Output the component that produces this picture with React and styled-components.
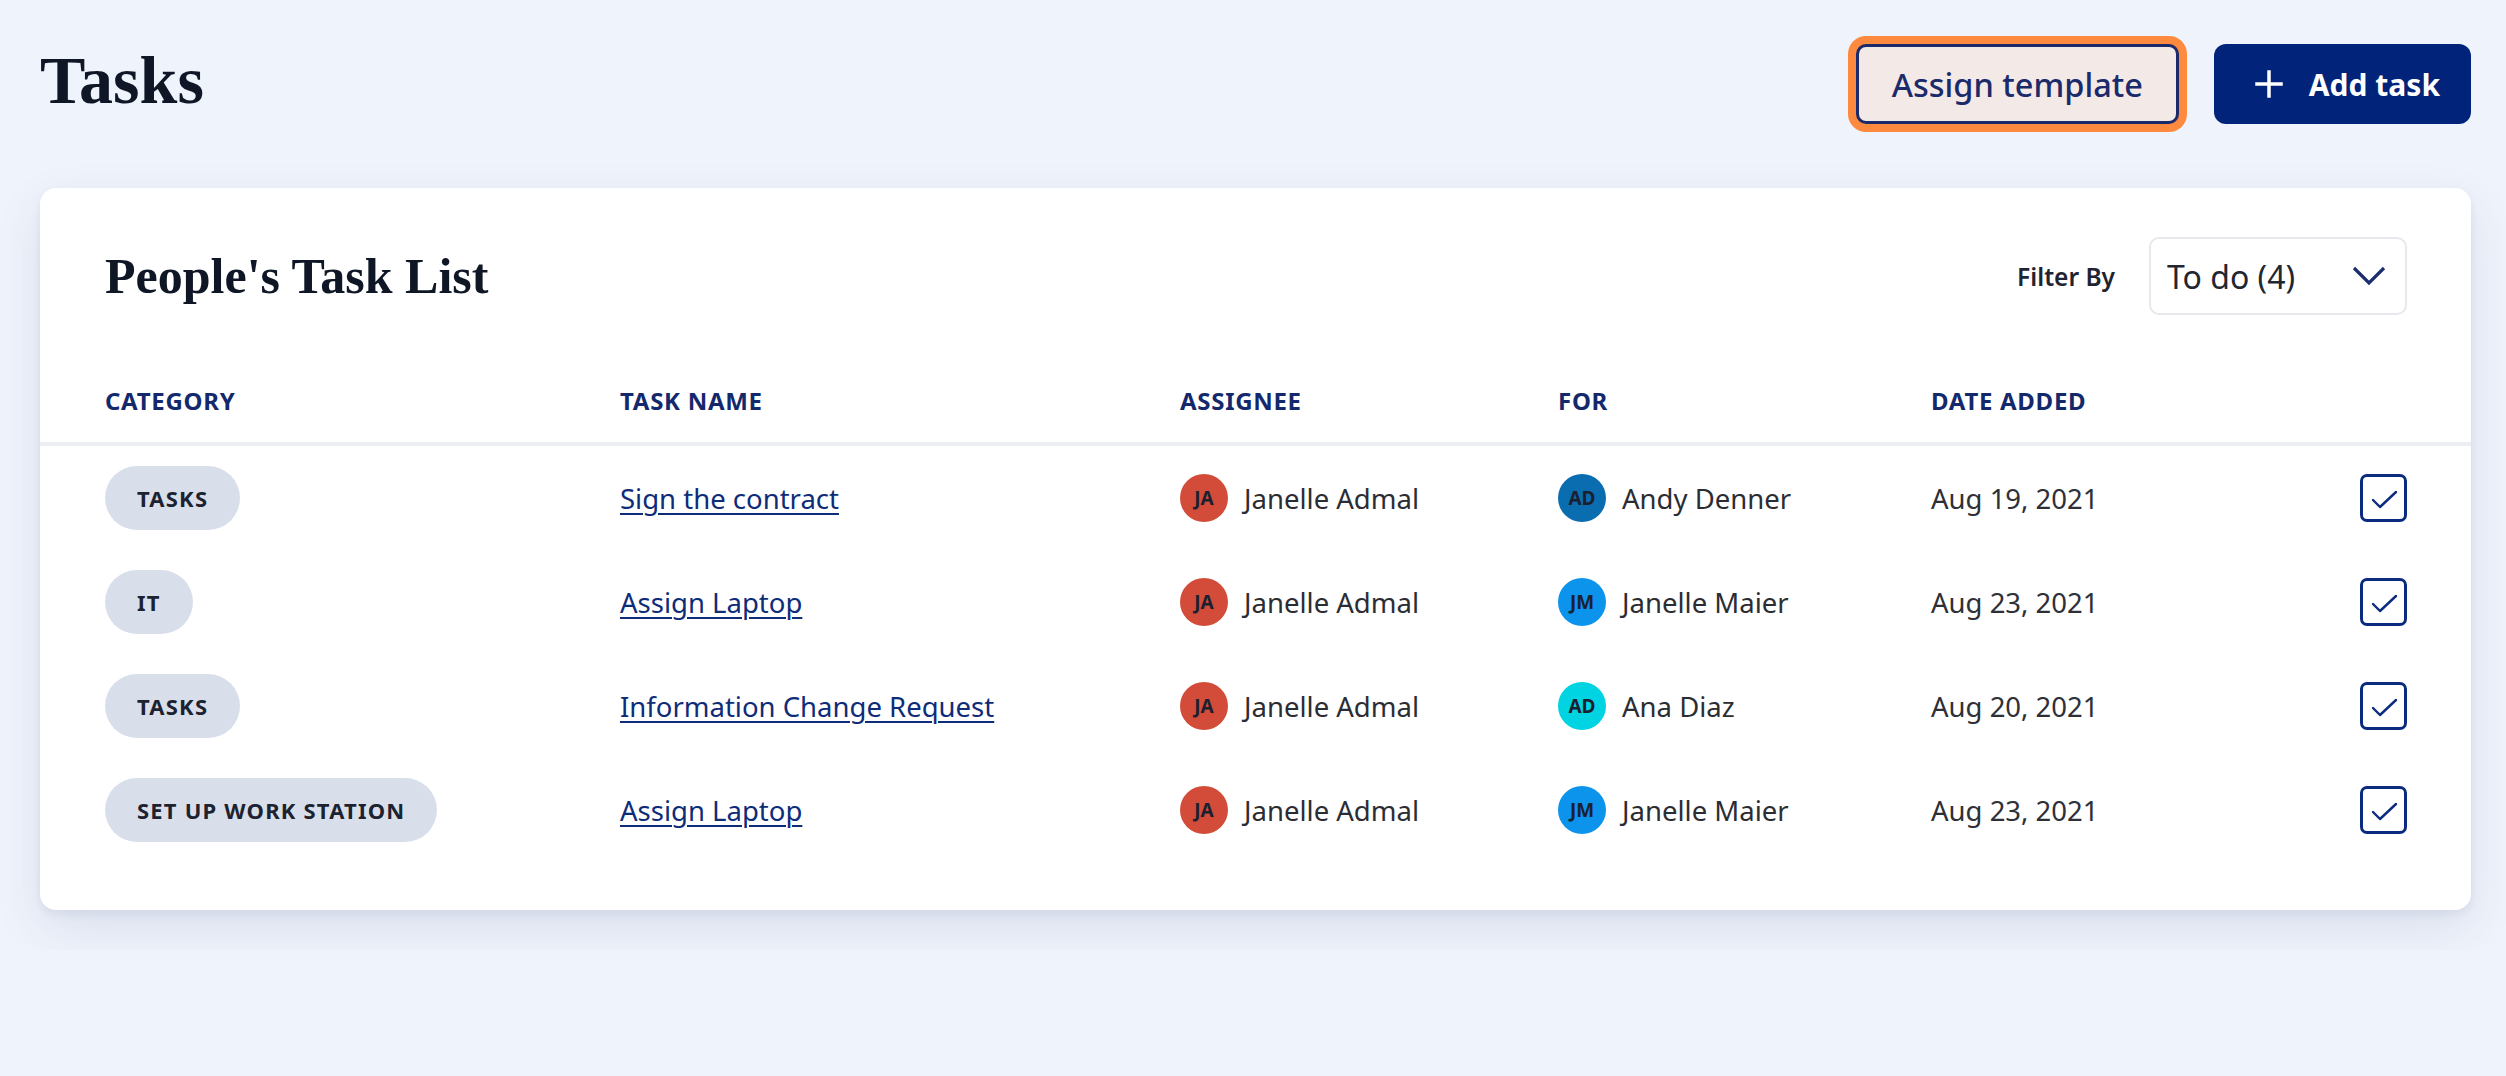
import styled, { createGlobalStyle } from 'styled-components';

const GlobalStyle = createGlobalStyle`
  * { box-sizing: border-box; }
  body {
    margin: 0;
    background: #eff3fb;
    font-family: "Noto Sans", "Open Sans", sans-serif;
    color: #2b2d33;
  }
`;

const tasks = [
  { category: 'TASKS', name: 'Sign the contract', assignee: { initials: 'JA', name: 'Janelle Admal', color: '#d24c39' }, forPerson: { initials: 'AD', name: 'Andy Denner', color: '#0a6db0' }, date: 'Aug 19, 2021' },
  { category: 'IT', name: 'Assign Laptop', assignee: { initials: 'JA', name: 'Janelle Admal', color: '#d24c39' }, forPerson: { initials: 'JM', name: 'Janelle Maier', color: '#0c93ec' }, date: 'Aug 23, 2021' },
  { category: 'TASKS', name: 'Information Change Request', assignee: { initials: 'JA', name: 'Janelle Admal', color: '#d24c39' }, forPerson: { initials: 'AD', name: 'Ana Diaz', color: '#00d3e1' }, date: 'Aug 20, 2021' },
  { category: 'SET UP WORK STATION', name: 'Assign Laptop', assignee: { initials: 'JA', name: 'Janelle Admal', color: '#d24c39' }, forPerson: { initials: 'JM', name: 'Janelle Maier', color: '#0c93ec' }, date: 'Aug 23, 2021' },
];

export default function App() {
  return (
    <>
      <GlobalStyle />
      <Page>
        <Header>
          <PageTitle>Tasks</PageTitle>
          <Actions>
            <OutlineButton>Assign template</OutlineButton>
            <PrimaryButton>
              <svg width="28" height="28" viewBox="0 0 28 28" fill="none" stroke="#fff" strokeWidth="3.5" strokeLinecap="square">
                <path d="M14 2v24M2 14h24" />
              </svg>
              Add task
            </PrimaryButton>
          </Actions>
        </Header>

        <Card>
          <CardHeader>
            <CardTitle>People's Task List</CardTitle>
            <Filter>
              <FilterLabel>Filter By</FilterLabel>
              <Select>
                <span>To do (4)</span>
                <svg width="34" height="20" viewBox="0 0 34 20" fill="none" stroke="#1b2f6e" strokeWidth="3.2">
                  <path d="M2 2l15 15L32 2" />
                </svg>
              </Select>
            </Filter>
          </CardHeader>

          <TableHead>
            <HeadCell>Category</HeadCell>
            <HeadCell>Task Name</HeadCell>
            <HeadCell>Assignee</HeadCell>
            <HeadCell>For</HeadCell>
            <HeadCell>Date Added</HeadCell>
            <span />
          </TableHead>

          {tasks.map((t, i) => (
            <Row key={i}>
              <div><Chip>{t.category}</Chip></div>
              <div><TaskLink href="#">{t.name}</TaskLink></div>
              <Person>
                <Avatar $bg={t.assignee.color}>{t.assignee.initials}</Avatar>
                {t.assignee.name}
              </Person>
              <Person>
                <Avatar $bg={t.forPerson.color}>{t.forPerson.initials}</Avatar>
                {t.forPerson.name}
              </Person>
              <DateText>{t.date}</DateText>
              <Check>
                <svg width="46" height="46" viewBox="0 0 46 46" fill="none" stroke="#0b2c7e" strokeWidth="2.4" strokeLinecap="round" strokeLinejoin="round">
                  <path d="M12 25l7 7 16-15" />
                </svg>
              </Check>
            </Row>
          ))}
        </Card>
      </Page>
    </>
  );
}

const Page = styled.div`
  padding: 44px 35px 40px 40px;
`;

const Header = styled.div`
  display: flex;
  justify-content: space-between;
  align-items: center;
  margin-bottom: 64px;
`;

const PageTitle = styled.h1`
  margin: 0;
  padding-bottom: 8px;
  font-family: "Liberation Serif", serif;
  font-weight: 700;
  font-size: 68px;
  line-height: 72px;
  color: #0f1726;
`;

const Actions = styled.div`
  display: flex;
  gap: 35px;
`;

const OutlineButton = styled.button`
  height: 80px;
  padding: 0 33px;
  border: 3px solid #1b2a6b;
  border-radius: 10px;
  background: #f3e9e6;
  color: #1b2a6b;
  font-family: "Noto Sans", sans-serif;
  font-size: 32.5px;
  font-weight: 500;
  box-shadow: 0 0 0 8px #fd8a3f;
  cursor: pointer;
`;

const PrimaryButton = styled.button`
  display: flex;
  align-items: center;
  gap: 26px;
  height: 80px;
  padding: 0 31px 0 41px;
  border: none;
  border-radius: 12px;
  background: #012379;
  color: #fff;
  font-family: "Noto Sans", sans-serif;
  font-size: 30px;
  font-weight: 700;
  cursor: pointer;
`;

const Card = styled.div`
  background: #fff;
  border-radius: 16px;
  padding: 49px 0 48px;
  box-shadow: 0 4px 8px rgba(40, 60, 120, 0.07), 0 18px 48px rgba(40, 60, 120, 0.1);
`;

const CardHeader = styled.div`
  display: flex;
  justify-content: space-between;
  align-items: center;
  height: 78px;
  padding: 0 64px 0 65px;
`;

const CardTitle = styled.h2`
  margin: 0;
  font-family: "Liberation Serif", serif;
  font-weight: 700;
  font-size: 50px;
  color: #0f1726;
`;

const Filter = styled.div`
  display: flex;
  align-items: center;
  gap: 34px;
`;

const FilterLabel = styled.span`
  font-size: 24.5px;
  font-weight: 600;
  color: #1f2430;
`;

const Select = styled.div`
  display: flex;
  align-items: center;
  justify-content: space-between;
  width: 258px;
  height: 78px;
  padding: 0 19px 0 16px;
  border: 2px solid #e7e8ec;
  border-radius: 10px;
  font-size: 32px;
  color: #222630;
`;

const columns = '515px 560px 378px 373px 1fr auto';

const TableHead = styled.div`
  display: grid;
  grid-template-columns: ${columns};
  align-items: center;
  padding: 70px 64px 25px 65px;
  border-bottom: 4px solid #eceef2;
`;

const HeadCell = styled.span`
  font-size: 24px;
  line-height: 32px;
  font-weight: 700;
  letter-spacing: 0.7px;
  text-transform: uppercase;
  color: #13296c;
`;

const Row = styled.div`
  display: grid;
  grid-template-columns: ${columns};
  align-items: center;
  height: 104px;
  padding: 0 64px 0 65px;
  font-size: 27.5px;
`;

const Chip = styled.span`
  display: inline-flex;
  align-items: center;
  height: 64px;
  padding: 0 32px;
  border-radius: 32px;
  background: #d9dfea;
  color: #1c2230;
  font-size: 22px;
  font-weight: 700;
  letter-spacing: 1.2px;
`;

const TaskLink = styled.a`
  color: #0e2c78;
  text-decoration: underline;
  text-decoration-thickness: 2px;
  text-underline-offset: 4px;
`;

const Person = styled.div`
  display: flex;
  align-items: center;
  gap: 16px;
  color: #2b2d33;
`;

const Avatar = styled.span`
  display: inline-flex;
  align-items: center;
  justify-content: center;
  width: 48px;
  height: 48px;
  border-radius: 50%;
  background: ${(p) => p.$bg};
  color: #1a2030;
  font-size: 19px;
  font-weight: 700;
`;

const DateText = styled.span`
  color: #2e3038;
`;

const Check = styled.span`
  display: flex;
  align-items: center;
  justify-content: center;
  width: 47px;
  height: 48px;
  border: 3px solid #0b2c7e;
  border-radius: 7px;
  svg {
    flex: none;
  }
`;
